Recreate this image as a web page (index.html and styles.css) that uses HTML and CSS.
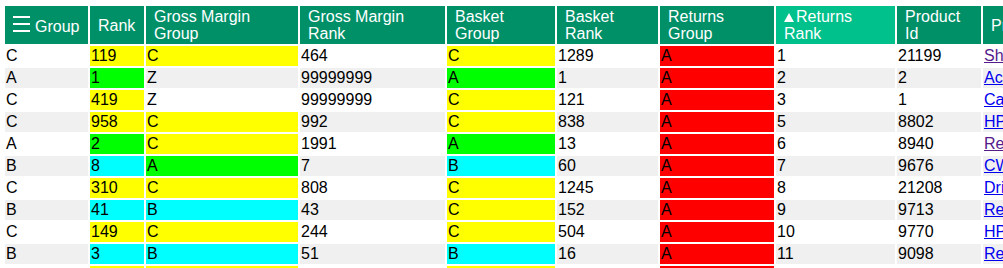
FILE: index.html
```html
<!DOCTYPE html>
<html>
<head>
<meta charset="utf-8">
<title>Product groups</title>
<link rel="stylesheet" href="styles.css">
</head>
<body>
<table class="grid">
  <thead>
    <tr>
      <th class="w-group"><svg class="menu" width="17" height="16" viewBox="0 0 17 16"><rect x="0" y="0" width="17" height="2" fill="#fff"/><rect x="0" y="7" width="17" height="2" fill="#fff"/><rect x="0" y="14" width="17" height="2" fill="#fff"/></svg>Group</th>
      <th class="w-rank">Rank</th>
      <th class="w-gmg">Gross Margin<br>Group</th>
      <th class="w-gmr">Gross Margin<br>Rank</th>
      <th class="w-bg">Basket<br>Group</th>
      <th class="w-br">Basket<br>Rank</th>
      <th class="w-rg">Returns<br>Group</th>
      <th class="w-rr sorted"><svg class="sort" width="10" height="9" viewBox="0 0 10 9"><polygon points="5,0 10,9 0,9" fill="#fff"/></svg>Returns<br>Rank</th>
      <th class="w-pid">Product<br>Id</th>
      <th class="w-pn">Product Name</th>
    </tr>
  </thead>
  <tbody>
    <tr><td>C</td><td class="y">119</td><td class="y">C</td><td>464</td><td class="y">C</td><td>1289</td><td class="r">A</td><td>1</td><td>21199</td><td><a class="visited" href="#p21199">Shower Curtain Rings</a></td></tr>
    <tr><td>A</td><td class="g">1</td><td>Z</td><td>99999999</td><td class="g">A</td><td>1</td><td class="r">A</td><td>2</td><td>2</td><td><a class="link" href="#p2">Acrylic Paint Set</a></td></tr>
    <tr><td>C</td><td class="y">419</td><td>Z</td><td>99999999</td><td class="y">C</td><td>121</td><td class="r">A</td><td>3</td><td>1</td><td><a class="link" href="#p1">Cable Ties</a></td></tr>
    <tr><td>C</td><td class="y">958</td><td class="y">C</td><td>992</td><td class="y">C</td><td>838</td><td class="r">A</td><td>5</td><td>8802</td><td><a class="link" href="#p8802">HP Laptop Charger</a></td></tr>
    <tr><td>A</td><td class="g">2</td><td class="y">C</td><td>1991</td><td class="g">A</td><td>13</td><td class="r">A</td><td>6</td><td>8940</td><td><a class="visited" href="#p8940">Red Wine Glasses</a></td></tr>
    <tr><td>B</td><td class="c">8</td><td class="g">A</td><td>7</td><td class="c">B</td><td>60</td><td class="r">A</td><td>7</td><td>9676</td><td><a class="link" href="#p9676">CW Desk Lamp</a></td></tr>
    <tr><td>C</td><td class="y">310</td><td class="y">C</td><td>808</td><td class="y">C</td><td>1245</td><td class="r">A</td><td>8</td><td>21208</td><td><a class="link" href="#p21208">Drill Bit Set</a></td></tr>
    <tr><td>B</td><td class="c">41</td><td class="c">B</td><td>43</td><td class="y">C</td><td>152</td><td class="r">A</td><td>9</td><td>9713</td><td><a class="link" href="#p9713">Remote Control</a></td></tr>
    <tr><td>C</td><td class="y">149</td><td class="y">C</td><td>244</td><td class="y">C</td><td>504</td><td class="r">A</td><td>10</td><td>9770</td><td><a class="link" href="#p9770">HP Ink Cartridge</a></td></tr>
    <tr><td>B</td><td class="c">3</td><td class="c">B</td><td>51</td><td class="c">B</td><td>16</td><td class="r">A</td><td>11</td><td>9098</td><td><a class="link" href="#p9098">Reading Glasses</a></td></tr>
    <tr><td>C</td><td class="y">155</td><td class="y">C</td><td>312</td><td class="y">C</td><td>97</td><td class="r">A</td><td>12</td><td>9101</td><td><a class="link" href="#p9101">Rope Light</a></td></tr>
  </tbody>
</table>
</body>
</html>
```
FILE: styles.css
```css
html, body {
  overflow: hidden;
}
body {
  margin: 0;
  background: #fff;
  font-family: "Liberation Sans", Arial, sans-serif;
  font-size: 16px;
  color: #000;
}
.grid {
  margin: 4px 0 0 3px;
  border-collapse: separate;
  border-spacing: 2px;
  table-layout: fixed;
  width: 1182px;
}
.grid th,
.grid td {
  box-sizing: border-box;
  white-space: nowrap;
  overflow: hidden;
}
.grid th {
  background: #009068;
  color: #fff;
  font-weight: normal;
  text-align: left;
  vertical-align: middle;
  line-height: 17px;
  padding: 2px 8px;
  height: 38px;
}
.grid th.sorted {
  background: #00c08c;
}
.grid td {
  line-height: 18px;
  padding: 1px;
  height: 20px;
}
.grid tbody tr:nth-child(even) td {
  background: #f0f0f0;
}
.grid tbody tr td.y { background: #ffff00; }
.grid tbody tr td.g { background: #00ff00; }
.grid tbody tr td.c { background: #00ffff; }
.grid tbody tr td.r { background: #ff0000; }

.menu {
  vertical-align: baseline;
  margin-right: 5px;
}
.sort {
  vertical-align: baseline;
  margin-right: 2px;
}

.w-group { width: 83px; }
.w-rank { width: 54px; }
.w-gmg { width: 152px; }
.w-gmr { width: 145px; }
.w-bg { width: 108px; }
.w-br { width: 101px; }
.w-rg { width: 114px; }
.w-rr { width: 119px; }
.w-pid { width: 84px; }
.w-pn { width: 200px; }

a.link { color: #0000ee; text-decoration: underline; }
a.visited { color: #551a8b; text-decoration: underline; }
```
